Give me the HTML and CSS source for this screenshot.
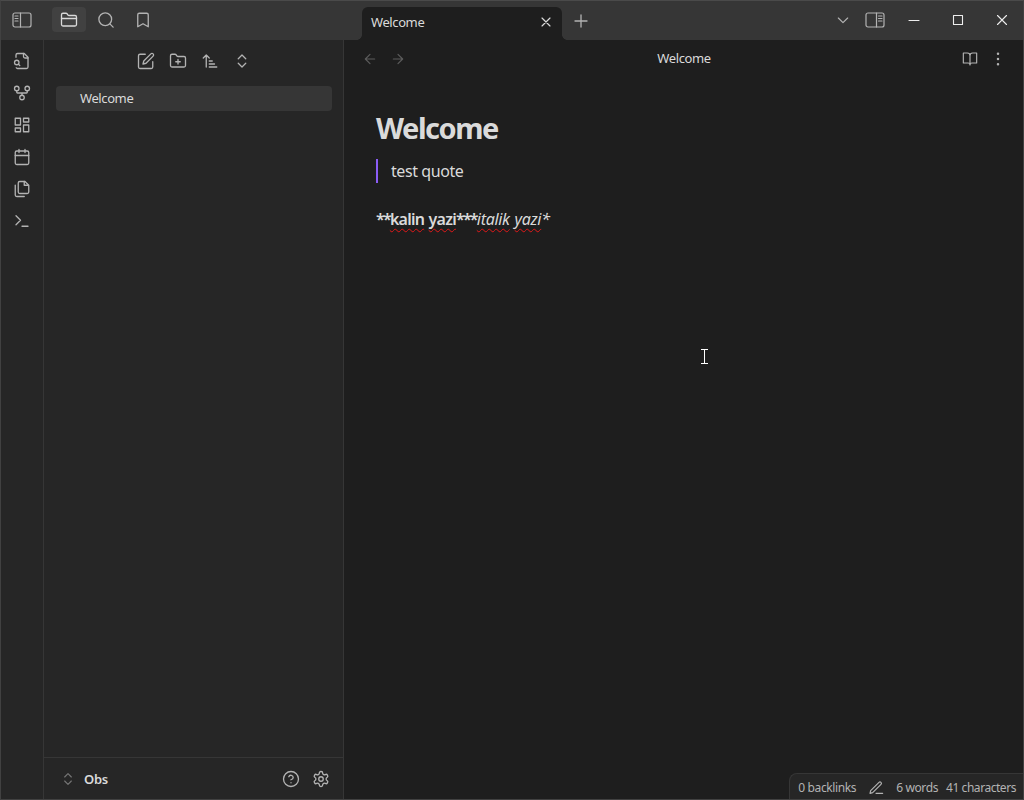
FILE: index.html
```html
<!DOCTYPE html>
<html lang="en">
<head>
    <meta charset="UTF-8">
    <meta name="viewport" content="width=device-width, initial-scale=1.0">
    <title>Welcome - Obs</title>
    <link rel="stylesheet" href="styles.css">
</head>
<body>

<div class="window">
    <!-- Title bar -->
    <header class="titlebar">
        <div class="titlebar-left">
            <svg class="panel-icon" viewBox="0 0 20 16"><rect x="1" y="1" width="18" height="14" rx="2"/><path d="M8.5 1v14M3 4h3M3 6.5h3M3 9h3"/></svg>
            <div class="side-tabs">
                <div class="side-tab active"><svg class="icon" viewBox="0 0 24 24"><path d="M20 20a2 2 0 0 0 2-2V8a2 2 0 0 0-2-2h-7.9a2 2 0 0 1-1.69-.9L9.6 3.9A2 2 0 0 0 7.93 3H4a2 2 0 0 0-2 2v13a2 2 0 0 0 2 2Z"/><path d="M2 10h20"/></svg></div>
                <div class="side-tab"><svg class="icon" viewBox="0 0 24 24"><circle cx="11" cy="11" r="8.5"/><path d="m21.5 21.5-4.3-4.3"/></svg></div>
                <div class="side-tab"><svg class="icon" viewBox="0 0 24 24"><path d="m19 21-7-4-7 4V5a2 2 0 0 1 2-2h10a2 2 0 0 1 2 2v16z"/></svg></div>
            </div>
        </div>
        <div class="tab">
            <span class="tab-title">Welcome</span>
            <svg class="tab-close" viewBox="0 0 24 24"><path d="M18 6 6 18M6 6l12 12"/></svg>
        </div>
        <svg class="icon new-tab" viewBox="0 0 24 24"><path d="M4 12h16M12 4v16"/></svg>
        <div class="titlebar-right">
            <svg class="icon small" viewBox="0 0 24 24"><path d="m5 9 7 7 7-7"/></svg>
            <svg class="panel-icon" viewBox="0 0 20 16"><rect x="1" y="1" width="18" height="14" rx="2"/><path d="M11.5 1v14M13.5 4h3.5M13.5 6.5h3.5M13.5 9h3.5"/></svg>
            <div class="window-buttons">
                <svg viewBox="0 0 12 12"><path d="M1 6.5h10"/></svg>
                <svg viewBox="0 0 12 12"><path d="M1.5 1.5h9v9h-9z"/></svg>
                <svg viewBox="0 0 12 12"><path d="m1.5 1.5 9 9M10.5 1.5l-9 9"/></svg>
            </div>
        </div>
    </header>

    <div class="workspace">
        <!-- Ribbon -->
        <nav class="ribbon">
            <svg class="icon" viewBox="0 0 24 24"><path d="M14 2v4a2 2 0 0 0 2 2h4"/><path d="M4.268 21a2 2 0 0 0 1.727 1H18a2 2 0 0 0 2-2V7l-5-5H6a2 2 0 0 0-2 2v3"/><path d="m9 18-1.5-1.5"/><circle cx="5" cy="14" r="3"/></svg>
            <svg class="icon" viewBox="0 0 24 24"><circle cx="12" cy="18" r="3"/><circle cx="5" cy="6" r="3"/><circle cx="19" cy="6" r="3"/><path d="M19 9v2c0 .6-.4 1-1 1H6c-.6 0-1-.4-1-1V9M12 12v3"/></svg>
            <svg class="icon" viewBox="0 0 24 24"><rect x="3" y="3" width="7" height="9"/><rect x="14" y="3" width="7" height="5"/><rect x="14" y="12" width="7" height="9"/><rect x="3" y="16" width="7" height="5"/></svg>
            <svg class="icon" viewBox="0 0 24 24"><rect x="3" y="4" width="18" height="18" rx="2"/><path d="M16 2v4M8 2v4M3 10h18"/></svg>
            <svg class="icon" viewBox="0 0 24 24"><path d="M15 2v5h5"/><path d="M9 18a2 2 0 0 1-2-2V4a2 2 0 0 1 2-2h7l5 5v9a2 2 0 0 1-2 2Z"/><path d="M3 7v13a2 2 0 0 0 2 2h10"/></svg>
            <svg class="icon" viewBox="0 0 24 24"><path d="m4 17 6-6-6-6M12 19h8"/></svg>
        </nav>

        <!-- File explorer -->
        <aside class="sidebar">
            <div class="nav-buttons">
                <svg class="icon" viewBox="0 0 24 24"><path d="M11 3H4a2 2 0 0 0-2 2v15a2 2 0 0 0 2 2h15a2 2 0 0 0 2-2v-7"/><path d="M18.5 2.5a2.121 2.121 0 1 1 3 3L12 15l-4 1 1-4Z"/></svg>
                <svg class="icon" viewBox="0 0 24 24"><path d="M20 20a2 2 0 0 0 2-2V8a2 2 0 0 0-2-2h-7.9a2 2 0 0 1-1.69-.9L9.6 3.9A2 2 0 0 0 7.93 3H4a2 2 0 0 0-2 2v13a2 2 0 0 0 2 2Z"/><path d="M12 10v6M9 13h6"/></svg>
                <svg class="icon" viewBox="0 0 24 24"><path d="m3 8 4-4 4 4M7 4v16M11 12h4M11 16h7M11 20h10"/></svg>
                <svg class="icon" viewBox="0 0 24 24"><path d="m7 15 5 5 5-5M7 9l5-5 5 5"/></svg>
            </div>
            <div class="file active">Welcome</div>
            <div class="vault">
                <svg class="icon small faint" viewBox="0 0 24 24"><path d="m7 15 5 5 5-5M7 9l5-5 5 5"/></svg>
                <span class="vault-name">Obs</span>
                <svg class="icon" viewBox="0 0 24 24"><circle cx="12" cy="12" r="10"/><path d="M9.09 9a3 3 0 0 1 5.83 1c0 2-3 3-3 3M12 17h.01"/></svg>
                <svg class="icon" viewBox="0 0 24 24"><path d="M12.22 2h-.44a2 2 0 0 0-2 2v.18a2 2 0 0 1-1 1.73l-.43.25a2 2 0 0 1-2 0l-.15-.08a2 2 0 0 0-2.73.73l-.22.38a2 2 0 0 0 .73 2.73l.15.1a2 2 0 0 1 1 1.72v.51a2 2 0 0 1-1 1.74l-.15.09a2 2 0 0 0-.73 2.73l.22.38a2 2 0 0 0 2.73.73l.15-.08a2 2 0 0 1 2 0l.43.25a2 2 0 0 1 1 1.73V20a2 2 0 0 0 2 2h.44a2 2 0 0 0 2-2v-.18a2 2 0 0 1 1-1.73l.43-.25a2 2 0 0 1 2 0l.15.08a2 2 0 0 0 2.73-.73l.22-.39a2 2 0 0 0-.73-2.73l-.15-.08a2 2 0 0 1-1-1.74v-.5a2 2 0 0 1 1-1.74l.15-.09a2 2 0 0 0 .73-2.73l-.22-.38a2 2 0 0 0-2.73-.73l-.15.08a2 2 0 0 1-2 0l-.43-.25a2 2 0 0 1-1-1.73V4a2 2 0 0 0-2-2z"/><circle cx="12" cy="12" r="3"/></svg>
            </div>
        </aside>

        <!-- Note -->
        <main class="note">
            <div class="view-header">
                <div class="view-nav">
                    <svg class="icon small" viewBox="0 0 24 24"><path d="m12 19-7-7 7-7M19 12H5"/></svg>
                    <svg class="icon small" viewBox="0 0 24 24"><path d="M5 12h14M12 5l7 7-7 7"/></svg>
                </div>
                <span class="view-title">Welcome</span>
                <div class="view-actions">
                    <svg class="icon small" viewBox="0 0 24 24"><path d="M2 3h6a4 4 0 0 1 4 4v14a3 3 0 0 0-3-3H2zM22 3h-6a4 4 0 0 0-4 4v14a3 3 0 0 1 3-3h7z"/></svg>
                    <svg class="icon small" viewBox="0 0 24 24"><circle cx="12" cy="12" r="1"/><circle cx="12" cy="4" r="1"/><circle cx="12" cy="20" r="1"/></svg>
                </div>
            </div>
            <div class="editor">
                <h1>Welcome</h1>
                <blockquote>test quote</blockquote>
                <p><b><span class="mark">**</span><span class="misspelled">kalin</span> <span class="misspelled">yazi</span><span class="mark">***</span></b><i><span class="misspelled">italik</span> <span class="misspelled">yazi</span>*</i></p>
            </div>
            <footer class="status-bar">
                <span class="backlinks">0 backlinks</span>
                <svg class="icon small" viewBox="0 0 24 24"><path d="M12 20h10M16.5 3.5a2.12 2.12 0 0 1 3 3L7 19l-4 1 1-4Z"/></svg>
                <span class="words">6 words</span>
                <span class="characters">41 characters</span>
            </footer>
        </main>
    </div>

    <!-- Text cursor -->
    <svg class="cursor" viewBox="0 0 9 17"><path d="M1 1.5h7M1 15.5h7M4.5 1v15"/></svg>
</div>

</body>
</html>
```
FILE: styles.css
```css
* {
    box-sizing: border-box;
}

body {
    margin: 0;
    background-color: #1e1e1e;
    color: #dadada;
    font-family: "Noto Sans", "Open Sans", sans-serif;
    font-size: 13px;
}

.window {
    position: relative;
    display: flex;
    flex-direction: column;
    height: 800px;
    border: 1px solid #414141;
    border-top-color: #4a4a4a;
    overflow: hidden;
}

svg {
    display: block;
    flex: none;
    fill: none;
    stroke: #b3b3b3;
    stroke-linecap: round;
    stroke-linejoin: round;
}

.icon {
    width: 18px;
    height: 18px;
    stroke-width: 1.75;
}

.icon.small {
    width: 16px;
    height: 16px;
}

.panel-icon {
    width: 20px;
    height: 16px;
    stroke-width: 1.2;
}

/* Title bar */
.titlebar {
    display: flex;
    height: 39px;
    background-color: #363636;
}

.titlebar-left {
    display: flex;
    align-items: center;
    width: 361px;
    padding: 0 0 2px 11px;
}

.side-tabs {
    display: flex;
    gap: 3px;
    margin-left: 20px;
}

.side-tab {
    display: flex;
    justify-content: center;
    align-items: center;
    width: 34px;
    height: 25px;
    border-radius: 4px;
}

.side-tab.active {
    background-color: #414141;
}

.side-tab.active svg {
    stroke: #dadada;
}

.tab {
    position: relative;
    display: flex;
    justify-content: space-between;
    align-items: center;
    width: 200px;
    margin-top: 6px;
    padding: 0 8px 3px 9px;
    background-color: #1e1e1e;
    border-radius: 6px 6px 0 0;
}

/* curved feet of the tab */
.tab::before,
.tab::after {
    content: "";
    position: absolute;
    bottom: 0;
    width: 5px;
    height: 5px;
}

.tab::before {
    left: -5px;
    background: radial-gradient(circle at 0 0, transparent 4.5px, #1e1e1e 5px);
}

.tab::after {
    right: -5px;
    background: radial-gradient(circle at 100% 0, transparent 4.5px, #1e1e1e 5px);
}

.tab-title,
.file,
.view-title {
    letter-spacing: -0.4px;
}

.tab-close {
    width: 16px;
    height: 16px;
    stroke: #dadada;
    stroke-width: 1.75;
}

.new-tab {
    margin: 11px 0 0 10px;
}

.titlebar-right {
    display: flex;
    align-items: center;
    margin-left: auto;
    padding-bottom: 2px;
}

.titlebar-right .panel-icon {
    margin-left: 14px;
}

.window-buttons {
    display: flex;
    gap: 32px;
    margin: 0 15px 0 23px;
}

.window-buttons svg {
    width: 12px;
    height: 12px;
    stroke: #eee;
    stroke-width: 1.1;
}

/* Workspace */
.workspace {
    display: flex;
    flex: 1;
    min-height: 0;
}

.ribbon {
    display: flex;
    flex-direction: column;
    align-items: center;
    gap: 14px;
    width: 43px;
    padding-top: 12px;
    background-color: #262626;
    border-right: 1px solid #363636;
}

.sidebar {
    display: flex;
    flex-direction: column;
    width: 300px;
    background-color: #262626;
    border-right: 1px solid #363636;
}

.nav-buttons {
    display: flex;
    justify-content: center;
    gap: 14px;
    padding-top: 12px;
}

.file {
    height: 25px;
    margin: 16px 11px 0 12px;
    padding-left: 24px;
    line-height: 25px;
    border-radius: 4px;
}

.file.active {
    background-color: #363636;
}

.vault {
    display: flex;
    align-items: center;
    height: 42px;
    margin-top: auto;
    padding: 0 13px 0 16px;
    border-top: 1px solid #363636;
}

.vault .icon + .icon {
    margin-left: 12px;
}

.vault-name {
    margin: 0 auto 0 8px;
    font-weight: 600;
    letter-spacing: -0.3px;
}

.faint {
    stroke: #757575;
}

/* Note */
.note {
    position: relative;
    display: flex;
    flex-direction: column;
    flex: 1;
    background-color: #1e1e1e;
}

.view-header {
    display: grid;
    grid-template-columns: 1fr auto 1fr;
    align-items: center;
    height: 36px;
    padding: 0 17px 0 18px;
}

.view-nav,
.view-actions {
    display: flex;
    gap: 12px;
    padding-top: 2px;
}

.view-nav svg {
    stroke: #5c5c5c;
}

.view-actions {
    justify-content: flex-end;
}

.editor {
    padding: 32px;
    font-size: 16px;
    line-height: 24px;
}

h1 {
    margin: 0;
    font-size: 29px;
    line-height: 39px;
    font-weight: 700;
    letter-spacing: -1.45px;
}

blockquote {
    margin: 12px 0 0;
    padding-left: 13px;
    border-left: 2px solid #8a5cf5;
    letter-spacing: -0.42px;
}

p {
    margin: 24px 0 0;
}

b {
    font-weight: 600;
    letter-spacing: -0.75px;
    word-spacing: 1px;
}

.mark {
    letter-spacing: -1.8px;
}

i {
    letter-spacing: -0.3px;
    word-spacing: 1px;
}

.misspelled {
    text-decoration: underline wavy #e01818 1px;
    text-decoration-skip-ink: none;
    text-underline-offset: 3px;
}

.status-bar {
    position: absolute;
    right: 0;
    bottom: 0;
    display: flex;
    align-items: center;
    height: 26px;
    padding: 2px 7px 0 8px;
    color: #b3b3b3;
    font-size: 12px;
    letter-spacing: -0.38px;
    background-color: #262626;
    border: 1px solid #363636;
    border-width: 1px 0 0 1px;
    border-top-left-radius: 8px;
}

.status-bar .icon {
    margin: 0 12px;
}

.characters {
    margin-left: 8px;
    letter-spacing: -0.45px;
}

.cursor {
    position: absolute;
    left: 699px;
    top: 347px;
    width: 9px;
    height: 17px;
    stroke: #fff;
    stroke-width: 1;
    stroke-linecap: butt;
}
```
